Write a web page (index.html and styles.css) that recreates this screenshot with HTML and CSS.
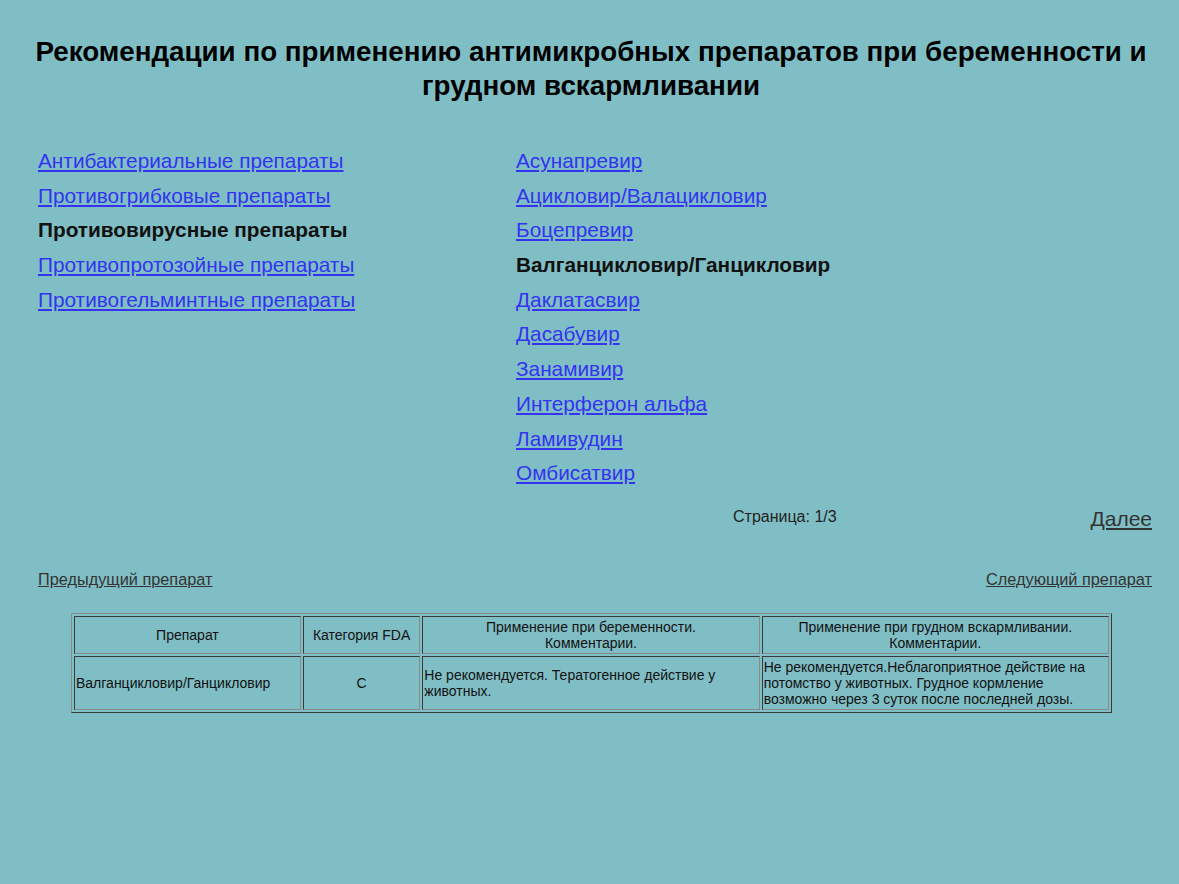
FILE: index.html
```html
<!DOCTYPE html>
<html lang="ru">
<head>
<meta charset="utf-8">
<title>Рекомендации</title>
<link rel="stylesheet" href="styles.css">
</head>
<body>
<div class="page">
  <h1 class="title">Рекомендации по применению антимикробных препаратов при беременности и грудном вскармливании</h1>

  <div class="nav">
    <ul class="list">
      <li><a href="#">Антибактериальные препараты</a></li>
      <li><a href="#">Противогрибковые препараты</a></li>
      <li><b>Противовирусные препараты</b></li>
      <li><a href="#">Противопротозойные препараты</a></li>
      <li><a href="#">Противогельминтные препараты</a></li>
    </ul>
    <ul class="list">
      <li><a href="#">Асунапревир</a></li>
      <li><a href="#">Ацикловир/Валацикловир</a></li>
      <li><a href="#">Боцепревир</a></li>
      <li><b>Валганцикловир/Ганцикловир</b></li>
      <li><a href="#">Даклатасвир</a></li>
      <li><a href="#">Дасабувир</a></li>
      <li><a href="#">Занамивир</a></li>
      <li><a href="#">Интерферон альфа</a></li>
      <li><a href="#">Ламивудин</a></li>
      <li><a href="#">Омбисатвир</a></li>
    </ul>
  </div>

  <div class="pager">
    <span class="pages">Страница: 1/3</span>
    <a class="more" href="#">Далее</a>
  </div>

  <div class="prevnext">
    <a href="#">Предыдущий препарат</a>
    <a href="#">Следующий препарат</a>
  </div>

  <table class="drug">
    <colgroup>
      <col class="c1"><col class="c2"><col class="c3"><col class="c4">
    </colgroup>
    <tr>
      <th>Препарат</th>
      <th>Категория FDA</th>
      <th>Применение при беременности.<br>Комментарии.</th>
      <th>Применение при грудном вскармливании.<br>Комментарии.</th>
    </tr>
    <tr>
      <td>Валганцикловир/Ганцикловир</td>
      <td class="center">C</td>
      <td>Не рекомендуется. Тератогенное действие у животных.</td>
      <td>Не рекомендуется.Неблагоприятное действие на потомство у животных. Грудное кормление возможно через 3 суток после последней дозы.</td>
    </tr>
  </table>
</div>
</body>
</html>
```

FILE: styles.css
```css
html, body {
  margin: 0;
  padding: 0;
  background: #80bec5;
}
body {
  font-family: Arial, "Liberation Sans", sans-serif;
  color: #111;
}
.page {
  padding: 35px 27px 40px 38px;
}
.title {
  margin: 0 0 41px -8px;
  font-size: 27.75px;
  line-height: 34px;
  font-weight: bold;
  text-align: center;
  color: #000;
}
.nav {
  display: grid;
  grid-template-columns: 478px 1fr;
}
.list {
  list-style: none;
  margin: 0;
  padding: 0;
}
.list li {
  font-size: 20.8px;
  line-height: 34.7px;
  height: 34.7px;
}
.list a {
  color: #3333f0;
  text-decoration: underline;
}
.list b {
  color: #111;
}
.pager {
  display: grid;
  grid-template-columns: 695px 1fr auto;
  align-items: center;
  margin-top: 13px;
  height: 30px;
}
.pages {
  grid-column: 2;
  font-size: 16px;
  color: #222;
  margin-top: -4px;
}
.more {
  grid-column: 3;
  font-size: 21px;
  color: #333;
  text-decoration: underline;
}
.prevnext {
  display: flex;
  justify-content: space-between;
  margin-top: 36px;
  font-size: 16.3px;
}
.prevnext a {
  color: #333;
  text-decoration: underline;
}
.drug {
  margin: 24px 0 0 33px;
  width: 1041px;
  table-layout: fixed;
  border-collapse: separate;
  border-spacing: 2px;
  border: 1px solid;
  border-color: #8a8a8a #3a3a3a #3a3a3a #8a8a8a;
  font-size: 14px;
  color: #111;
}
.c1 { width: 226px; }
.c2 { width: 117px; }
.c3 { width: 336px; }
.c4 { width: 346px; }
.drug th, .drug td {
  border: 1px solid;
  border-color: #3a3a3a #8a8a8a #8a8a8a #3a3a3a;
  padding: 2px 1px;
  vertical-align: middle;
}
.drug th {
  font-weight: normal;
  text-align: center;
}
.drug td {
  text-align: left;
}
.drug td.center {
  text-align: center;
}
```
